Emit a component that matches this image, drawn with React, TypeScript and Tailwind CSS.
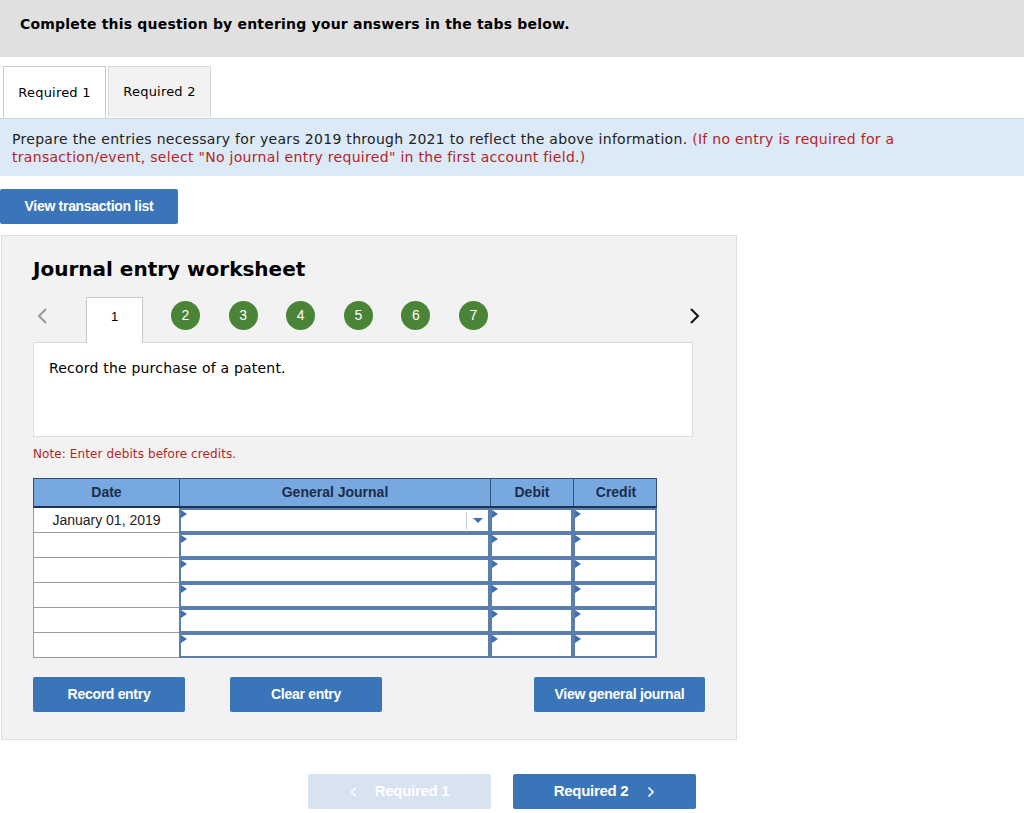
import { FC } from "react";
import classNames from "clsx";

const rows = [0, 1, 2, 3, 4, 5];
const steps = [2, 3, 4, 5, 6, 7];

const Marker: FC = () => (
  <span
    className={classNames(
      "absolute top-0 left-0 w-0 h-0",
      "border-y-[4px] border-y-transparent border-l-[6px] border-l-[#3f6fae]",
    )}
  />
);

const InputCell: FC<{ dropdown?: boolean }> = ({ dropdown }) => (
  <div className="relative h-full border-2 border-[#5b7eb0] bg-white">
    <Marker />
    {dropdown && (
      <div className="absolute right-0 top-[2px] bottom-[2px] w-[22px] border-l border-[#c9c9c9] flex items-center justify-center">
        <span className="w-0 h-0 border-x-[5px] border-x-transparent border-t-[5px] border-t-[#3f6fae]" />
      </div>
    )}
  </div>
);

const BlueButton: FC<{ label: string; className?: string }> = ({
  label,
  className,
}) => (
  <button
    className={classNames(
      "h-[35px] rounded-[2px] bg-[#3a75ba] text-white",
      "font-['Liberation_Sans',sans-serif] font-bold text-[14px] tracking-[-0.3px]",
      className,
    )}
  >
    {label}
  </button>
);

export default function App() {
  return (
    <div className="w-[1024px] h-[813px] bg-white font-['DejaVu_Sans',sans-serif] text-black">
      <div className="h-[57px] bg-[#e0e0e0] pl-5 pt-[15px] text-[14px] font-bold leading-[18px] tracking-[0.2px]">
        Complete this question by entering your answers in the tabs below.
      </div>

      <div className="flex pl-[3px] gap-[2px] mt-[9px]">
        <div className="w-[103px] h-[52px] bg-white border border-b-0 border-[#c8c8c8] flex items-center justify-center text-[13px] tracking-[0.2px]">
          Required 1
        </div>
        <div className="w-[103px] h-[51px] bg-[#f2f2f2] border border-b-0 border-[#d8d8d8] flex items-center justify-center text-[13px] tracking-[0.2px]">
          Required 2
        </div>
      </div>

      <div className="h-[58px] bg-[#dce9f6] border-t border-[#c8d6e4] px-3 pt-[11px] text-[14px] leading-[18px] tracking-[0.3px] text-[#222]">
        Prepare the entries necessary for years 2019 through 2021 to reflect
        the above information.{" "}
        <span className="text-[#b51f26]">
          (If no entry is required for a
          <br />
          transaction/event, select "No journal entry required" in the first
          account field.)
        </span>
      </div>

      <BlueButton
        label="View transaction list"
        className="mt-[13px] w-[178px]"
      />

      <div className="mt-[11px] ml-px w-[736px] h-[505px] bg-[#f2f2f2] border border-[#dedede] pl-[31px] pt-[20px]">
        <div className="text-[20px] font-bold leading-[26px]">
          Journal entry worksheet
        </div>

        <div className="flex items-end w-[668px] h-[45px] mt-[15px]">
          <div className="w-[53px] h-full flex items-center pl-[3px] pb-[8px] text-[#9a9a9a]">
            <svg width="12" height="18" viewBox="0 0 12 18" fill="none">
              <path d="M10 2L3 9l7 7" stroke="currentColor" strokeWidth="2" />
            </svg>
          </div>
          <div className="relative z-10 w-[57px] h-[46px] -mb-px bg-white border border-b-0 border-[#c8c8c8] flex items-center justify-center pb-[8px] text-[13px] font-['Liberation_Sans',sans-serif]">
            1
          </div>
          <div className="flex h-full items-center pb-[8px] gap-[28.6px] ml-[28px]">
            {steps.map((s) => (
              <div
                key={s}
                className="w-[29px] h-[29px] rounded-full bg-[#4a8537] text-white flex items-center justify-center text-[14px] font-['Liberation_Sans',sans-serif]"
              >
                {s}
              </div>
            ))}
          </div>
          <div className="ml-auto h-full flex items-center pb-[8px]">
            <svg width="12" height="18" viewBox="0 0 12 18" fill="none">
              <path d="M2 2l7 7-7 7" stroke="#111" strokeWidth="2" />
            </svg>
          </div>
        </div>

        <div className="w-[660px] h-[95px] bg-white border border-[#dcdcdc] pl-[15px] pt-[16px] text-[14px] leading-[18px] tracking-[0.2px]">
          Record the purchase of a patent.
        </div>

        <div className="mt-[9px] text-[12px] leading-[16px] text-[#b51f26] tracking-[0.1px]">
          Note: Enter debits before credits.
        </div>

        <div className="mt-[16px] w-[624px] font-['Liberation_Sans',sans-serif]">
          <div className="grid grid-cols-[146px_311px_83px_84px] h-[30px] bg-[#77a9e0] border border-[#2f4f7a] border-b-2 border-b-[#1e3350] text-[#1c2d4a] text-[14px] font-bold">
            <div className="flex items-center justify-center border-r border-[#2f4f7a]">
              Date
            </div>
            <div className="flex items-center justify-center border-r border-[#2f4f7a]">
              General Journal
            </div>
            <div className="flex items-center justify-center border-r border-[#2f4f7a]">
              Debit
            </div>
            <div className="flex items-center justify-center">Credit</div>
          </div>
          {rows.map((r) => (
            <div
              key={r}
              className="grid grid-cols-[146px_311px_83px_84px] h-[25px]"
            >
              <div className="bg-white border-l border-b border-[#9a9a9a] flex items-center justify-center text-[14px] text-[#222]">
                {r === 0 ? "January 01, 2019" : ""}
              </div>
              <InputCell dropdown={r === 0} />
              <InputCell />
              <InputCell />
            </div>
          ))}
        </div>

        <div className="flex w-[672px] mt-[19px]">
          <BlueButton label="Record entry" className="w-[152px]" />
          <BlueButton label="Clear entry" className="w-[152px] ml-[45px]" />
          <BlueButton label="View general journal" className="w-[171px] ml-auto" />
        </div>
      </div>

      <div className="flex mt-[34px] ml-[308px] gap-[22px]">
        <button className="w-[183px] h-[35px] rounded-[2px] bg-[#d7e3f1] text-white font-['Liberation_Sans',sans-serif] font-bold text-[15px] tracking-[-0.3px] flex items-center justify-center gap-[17px]">
          <svg width="8" height="12" viewBox="0 0 8 12" fill="none">
            <path d="M6 1.5L1.5 6 6 10.5" stroke="white" strokeWidth="1.4" />
          </svg>
          Required 1
        </button>
        <button className="w-[183px] h-[35px] rounded-[2px] bg-[#3a75ba] text-white font-['Liberation_Sans',sans-serif] font-bold text-[15px] tracking-[-0.3px] flex items-center justify-center gap-[19px]">
          Required 2
          <svg width="8" height="12" viewBox="0 0 8 12" fill="none">
            <path d="M1.5 1.5L6 6l-4.5 4.5" stroke="white" strokeWidth="1.6" />
          </svg>
        </button>
      </div>
    </div>
  );
}
